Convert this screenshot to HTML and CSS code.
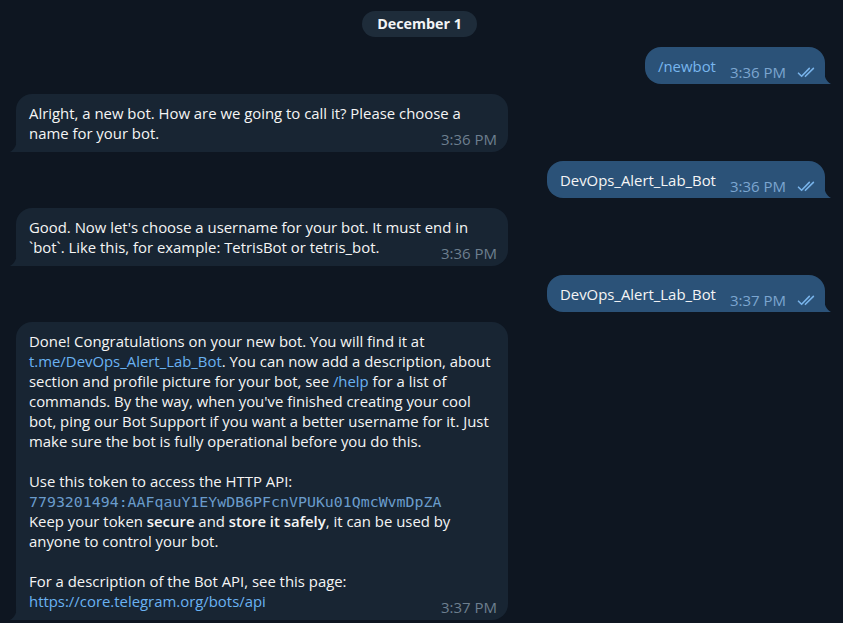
FILE: index.html
```html
<!DOCTYPE html>
<html lang="en">
<head>
<meta charset="utf-8">
<title>BotFather</title>
<link rel="stylesheet" href="styles.css">
</head>
<body>
<div class="chat">
  <div class="date-row"><span class="date">December 1</span></div>

  <div class="row out">
    <div class="bubble out">
      <span class="text cmd">/newbot</span>
      <span class="meta">3:36 PM<svg class="checks" viewBox="0 0 20 11" width="20" height="11"><path d="M1.5 6.2 L4.6 9.3 L12.3 1.4 M8.4 9.3 L16.4 1.4" /></svg></span>
      <svg class="tail" viewBox="0 0 7 14" width="7" height="14"><path d="M0 0 C0 7 2.5 11.5 7 14 L0 14 Z"/></svg>
    </div>
  </div>

  <div class="row in">
    <div class="bubble in">
      <div class="text">Alright, a new bot. How are we going to call it? Please choose a<br><span class="meta">3:36 PM</span>name for your bot.</div>
      <svg class="tail" viewBox="0 0 7 14" width="7" height="14"><path d="M7 0 C7 7 4.5 11.5 0 14 L7 14 Z"/></svg>
    </div>
  </div>

  <div class="row out">
    <div class="bubble out">
      <span class="text">DevOps_Alert_Lab_Bot</span>
      <span class="meta">3:36 PM<svg class="checks" viewBox="0 0 20 11" width="20" height="11"><path d="M1.5 6.2 L4.6 9.3 L12.3 1.4 M8.4 9.3 L16.4 1.4" /></svg></span>
      <svg class="tail" viewBox="0 0 7 14" width="7" height="14"><path d="M0 0 C0 7 2.5 11.5 7 14 L0 14 Z"/></svg>
    </div>
  </div>

  <div class="row in">
    <div class="bubble in">
      <div class="text">Good. Now let's choose a username for your bot. It must end in<br><span class="meta">3:36 PM</span>`bot`. Like this, for example: TetrisBot or tetris_bot.</div>
      <svg class="tail" viewBox="0 0 7 14" width="7" height="14"><path d="M7 0 C7 7 4.5 11.5 0 14 L7 14 Z"/></svg>
    </div>
  </div>

  <div class="row out">
    <div class="bubble out">
      <span class="text">DevOps_Alert_Lab_Bot</span>
      <span class="meta">3:37 PM<svg class="checks" viewBox="0 0 20 11" width="20" height="11"><path d="M1.5 6.2 L4.6 9.3 L12.3 1.4 M8.4 9.3 L16.4 1.4" /></svg></span>
      <svg class="tail" viewBox="0 0 7 14" width="7" height="14"><path d="M0 0 C0 7 2.5 11.5 7 14 L0 14 Z"/></svg>
    </div>
  </div>

  <div class="row in">
    <div class="bubble in">
      <div class="text">Done! Congratulations on your new bot. You will find it at<br><span class="link">t.me/DevOps_Alert_Lab_Bot</span>. You can now add a description, about<br>section and profile picture for your bot, see <span class="link">/help</span> for a list of<br>commands. By the way, when you've finished creating your cool<br>bot, ping our Bot Support if you want a better username for it. Just<br>make sure the bot is fully operational before you do this.<br><br>Use this token to access the HTTP API:<br><span class="mono">7793201494:AAFqauY1EYwDB6PFcnVPUKu01QmcWvmDpZA</span><br>Keep your token <b>secure</b> and <b>store it safely</b>, it can be used by<br>anyone to control your bot.<br><br>For a description of the Bot API, see this page:<br><span class="meta">3:37 PM</span><span class="link">https://core.telegram.org/bots/api</span></div>
      <svg class="tail" viewBox="0 0 7 14" width="7" height="14"><path d="M7 0 C7 7 4.5 11.5 0 14 L7 14 Z"/></svg>
    </div>
  </div>
</div>
</body>
</html>
```

FILE: styles.css
```css
html, body {
  margin: 0;
  padding: 0;
}

body {
  background: #0e1621;
  font-family: "Open Sans", "Noto Sans", sans-serif;
  font-size: 14.9px;
  color: #f5f5f5;
  height: 623px;
  overflow: hidden;
}

.chat {
  display: flex;
  flex-direction: column;
  padding-top: 11px;
}

.date-row {
  display: flex;
  justify-content: center;
  padding-right: 4px;
}

.date {
  background: #1e2c3a;
  border-radius: 13px;
  height: 26px;
  line-height: 26px;
  padding: 0 15px;
  font-weight: 700;
  font-size: 14.3px;
  color: #f2f4f6;
}

.row {
  display: flex;
}

.row.in {
  justify-content: flex-start;
  padding-left: 16px;
}

.row.out {
  justify-content: flex-end;
  padding-right: 18px;
}

.date-row + .row {
  margin-top: 10px;
}

.row.out + .row.in {
  margin-top: 10px;
}

.row.in + .row.out {
  margin-top: 9px;
}

.bubble {
  position: relative;
  line-height: 20px;
}

.bubble.in {
  background: #182533;
  width: 492px;
  box-sizing: border-box;
  padding: 9px 11px 9px 13px;
  border-radius: 16px 16px 16px 0;
}

.bubble.out {
  background: #2b5278;
  display: flex;
  align-items: flex-start;
  padding: 9px 8px 8px 13px;
  border-radius: 16px 16px 0 16px;
}

.text {
  white-space: nowrap;
}

.cmd {
  color: #78b6ee;
}

.link {
  color: #6ab2f2;
}

.mono {
  font-family: "DejaVu Sans Mono", "Liberation Mono", monospace;
  font-size: 14.9px;
  line-height: 1;
  color: #6a9ccc;
}

b {
  font-weight: 600;
}

.meta {
  font-size: 15px;
  line-height: 20px;
  margin-top: 6px;
  margin-bottom: -6px;
  white-space: nowrap;
}

.in .meta {
  float: right;
  color: #6d7f8f;
  margin-left: 10px;
}

.out .meta {
  color: #7ca6d0;
  margin-left: 14px;
}

.checks {
  display: inline-block;
  vertical-align: 0;
  margin-left: 11px;
  fill: none;
  stroke: #78b3ea;
  stroke-width: 1.6;
  stroke-linecap: round;
  stroke-linejoin: round;
}

.tail {
  position: absolute;
  bottom: 0;
  width: 7px;
  height: 14px;
}

.out .tail {
  right: -6px;
  fill: #2b5278;
}

.in .tail {
  left: -6px;
  fill: #182533;
}
```
